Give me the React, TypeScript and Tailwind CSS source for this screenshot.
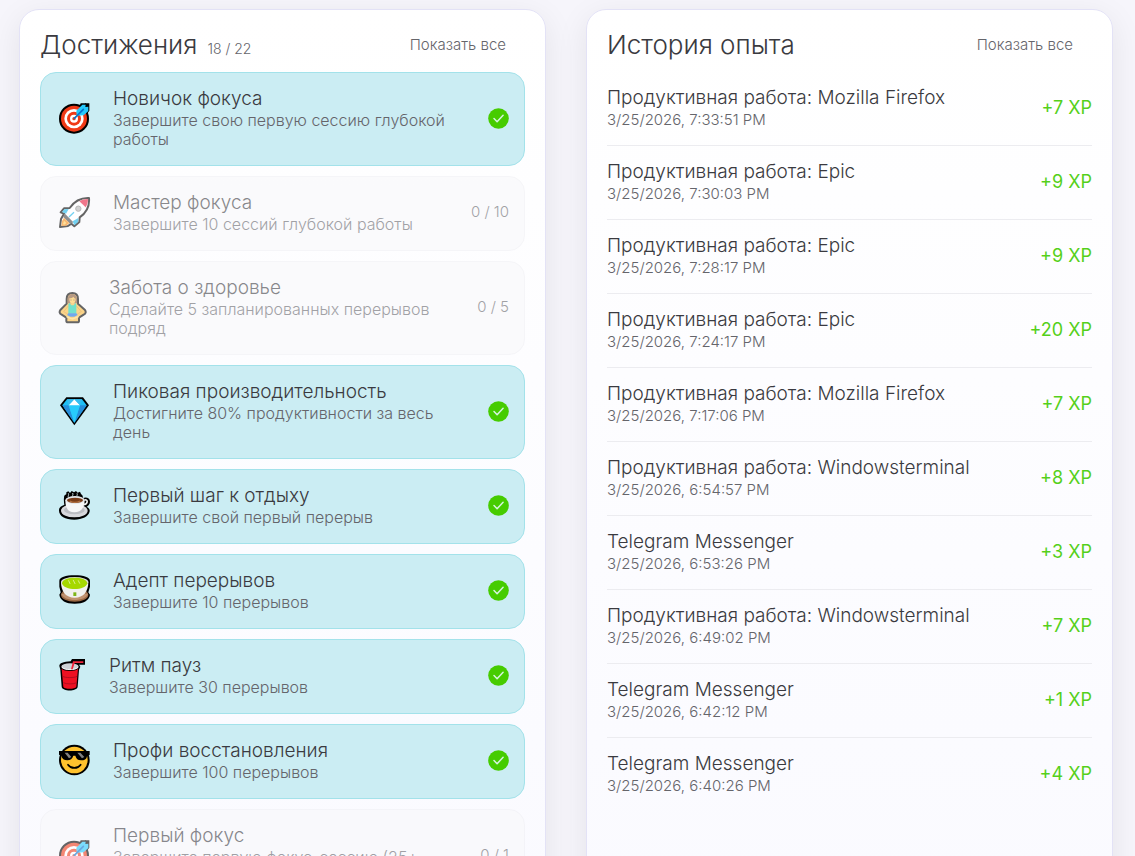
import React from 'react';

const TargetIcon = () => (
  <svg viewBox="54 36 99 99" className="w-[33px] h-[33px]" aria-hidden="true">
    <circle cx="102" cy="86" r="45" fill="#000" />
    <path d="M122 40h12l4-1v1h10v22l-10 14-28-6z" fill="#000" />
    <circle cx="102" cy="86" r="39" fill="#f03a17" />
    <circle cx="102" cy="86" r="29" fill="#fff" />
    <circle cx="102" cy="86" r="21" fill="#f03a17" />
    <circle cx="102" cy="86" r="12" fill="#fff" />
    <circle cx="102" cy="86" r="5" fill="#f03a17" />
    <path d="M110 77l-1-15 18-18h10l-1 7 9-1v13l-14 13z" fill="#26c9fc" />
    <path d="M103 85l27-27" stroke="#0a74cf" strokeWidth="5" strokeLinecap="round" />
  </svg>
);

const RocketIcon = () => (
  <svg viewBox="54 48 99 99" className="w-[33px] h-[33px]" aria-hidden="true">
    <path
      d="M147 54c-23-1-43 8-58 30l-17 1-10 12 10 4-9 16-3 24 24-3 10-7 9 8 15-13 1-14c22-15 30-34 28-58z"
      fill="#fff"
      stroke="#000"
      strokeWidth="6"
      strokeLinejoin="round"
    />
    <path d="M144 57c-10 0-18 2-26 7l19 18c5-8 7-16 7-25z" fill="#e81d3f" />
    <path d="M86 87l-13 1-7 8 12 5z" fill="#17b4e9" />
    <path d="M115 114l-1 12-11 10-5-12z" fill="#17b4e9" />
    <path d="M75 101l25 26-9 5-22-22z" fill="#454545" />
    <path d="M72 113l16 16-9 8-15 1 2-15z" fill="#f78b13" />
    <path d="M72 122l7 7-6 5-4-1z" fill="#ffd15c" />
    <path d="M87 111l15-14" stroke="#17b4e9" strokeWidth="4" />
    <circle cx="115" cy="86" r="8" fill="#b5b5b5" stroke="#8a8a8a" strokeWidth="3" />
  </svg>
);

const YogaIcon = () => (
  <svg viewBox="54 63 87 99" className="w-[29px] h-[33px]" aria-hidden="true">
    <path
      d="M97 69c-12 0-17 8-17 18v14l-19 19c-4 6-2 11 4 14l14 9v10c0 3 2 4 5 4h28c3 0 5-1 5-4v-10l14-9c6-3 8-8 4-14l-21-19V87c0-10-5-18-17-18z"
      fill="#f9b93c"
      stroke="#000"
      strokeWidth="6"
      strokeLinejoin="round"
    />
    <path d="M83 100V87c0-9 5-15 14-15s14 6 14 15v13z" fill="#8a5a35" />
    <path d="M88 85c6 0 9-2 12-5 2 4 5 5 7 6 0 9-4 15-10 15s-9-6-9-16z" fill="#ffc84f" />
    <path d="M91 90h4M100 90h4" stroke="#6b4521" strokeWidth="2" />
    <path d="M89 99l5 7h7l5-7 3 4v28H85v-28z" fill="#15cfa9" />
    <path d="M85 130h24l4 5-10 5H91l-10-5z" fill="#1470e0" />
    <path d="M85 108l-14 17 12 7M109 108l15 17-12 7" stroke="#d98c1c" strokeWidth="2" fill="none" />
    <path d="M79 140l18 7 19-7" stroke="#ffd773" strokeWidth="4" fill="none" />
  </svg>
);

const DiamondIcon = () => (
  <svg viewBox="54 59 99 99" className="w-[33px] h-[33px]" aria-hidden="true">
    <path d="M79 66h50l18 24-44 60-43-60z" fill="#000" />
    <path d="M81 72h45l14 18-37 52-36-52z" fill="#1fc0f5" />
    <path d="M67 90h19l17 52z" fill="#278eda" />
    <path d="M140 90h-20l-17 52z" fill="#278eda" />
    <path d="M86 90h34l-17 52z" fill="#28cbfc" />
    <path d="M103 72l17 18H86z" fill="#fff" />
    <path d="M81 72h22L86 90zM126 72h-23l17 18z" fill="#37bdf1" />
  </svg>
);

const CoffeeIcon = () => (
  <svg viewBox="54 57 99 99" className="w-[33px] h-[33px]" aria-hidden="true">
    <path
      d="M72 83c0-6 3-9 7-10v-6l6-3 5 5 5-6 7 4 6-4 5 5 7-3 3 7 4 4c1 3 2 5 2 8 10-4 21 0 21 11 0 7-5 12-10 15 6 3 10 8 9 14-3 16-22 25-46 25-28 0-47-11-46-29 0-8 8-13 16-15-1-7-2-15-1-22z"
      fill="#000"
    />
    <ellipse cx="103" cy="122" rx="40" ry="20" fill="#d8d8dc" />
    <ellipse cx="103" cy="120" rx="31" ry="13" fill="#bcbdc2" />
    <path d="M133 90c12-3 11 11-1 14" fill="none" stroke="#f1f1f1" strokeWidth="5" />
    <path d="M76 90c0 24 8 37 27 37s31-13 31-37z" fill="#f7f7f8" />
    <ellipse cx="105" cy="90" rx="29" ry="12" fill="#e5e5e7" />
    <ellipse cx="105" cy="91" rx="24" ry="8" fill="#793c18" />
    <path d="M89 93c9 5 21 5 32 0" stroke="#b87442" strokeWidth="4" fill="none" />
    <path d="M86 83c-4-5 2-7-1-13M99 82c-4-5 2-7-1-13M112 82c-4-5 2-7-1-12" stroke="#c4d6d8" strokeWidth="3" fill="none" />
  </svg>
);

const TeaIcon = () => (
  <svg viewBox="54 58 99 99" className="w-[33px] h-[33px]" aria-hidden="true">
    <path
      d="M104 62c-27 0-46 6-46 17v17l4 17-4 7c2 17 20 27 46 27s44-10 46-27l-5-7 5-17V79c0-11-19-17-46-17z"
      fill="#000"
    />
    <ellipse cx="104" cy="121" rx="41" ry="20" fill="#9c6a45" />
    <path d="M64 117c6 25 74 25 80 0z" fill="#c09270" />
    <path d="M63 81c0 29 14 48 41 48s41-19 41-48z" fill="#f1f1ee" />
    <ellipse cx="104" cy="82" rx="41" ry="15" fill="#dededa" />
    <path d="M66 86c2-22 74-22 76 0-4 23-72 23-76 0z" fill="#a6d800" />
    <path d="M86 78l4 9M100 77l5 10M115 78l4 8" stroke="#d9f18a" strokeWidth="3" strokeLinecap="round" />
    <path d="M100 113h9v11h-9z" fill="#7eb518" />
  </svg>
);

const CupIcon = () => (
  <svg viewBox="54 59 87 99" className="w-[29px] h-[33px]" aria-hidden="true">
    <path
      d="M58 80c0-8 12-13 34-14l4-7h39v17h-18l4 6-4 9-4 51c-2 15-46 15-48 0l-4-51z"
      fill="#000"
    />
    <path d="M65 88c8 9 42 9 49 0l-5 54c-3 8-37 8-39 0z" fill="#ed1022" />
    <ellipse cx="90" cy="82" rx="26" ry="10" fill="#cdd1d5" />
    <path d="M66 84c8 9 40 9 48 0" fill="none" stroke="#f6f6f6" strokeWidth="3" />
    <path d="M93 90l6-24h31v5h-26l-6 19z" fill="#ef253b" />
    <path d="M68 111c8 5 35 5 43 0M70 130c8 5 32 5 40 0" fill="none" stroke="#b40c1d" strokeWidth="3" />
  </svg>
);

const CoolIcon = () => (
  <svg viewBox="54 58 99 99" className="w-[33px] h-[33px]" aria-hidden="true">
    <circle cx="103" cy="106" r="46" fill="#000" />
    <circle cx="103" cy="106" r="40" fill="#ffc22d" />
    <path d="M57 79h92v12l-8 3c-1 11-9 13-18 13-10 0-14-5-17-14h-6c-3 9-9 14-18 14-10 0-16-5-18-14l-7-3z" fill="#000" />
    <path d="M74 84h9l11 13-7 4zM112 84h9l12 13-7 4z" fill="#818181" />
    <path d="M84 120c9 13 29 13 38 0" fill="none" stroke="#000" strokeWidth="5" strokeLinecap="round" />
  </svg>
);

const CheckBadge = () => (
  <svg viewBox="0 0 21 21" className="w-[21px] h-[21px] shrink-0" role="img" aria-label="Получено">
    <circle cx="10.5" cy="10.5" r="10.3" fill="#46cc00" />
    <path d="M6 10.6l3.1 3.2 6-6.6" fill="none" stroke="#d5f3dd" strokeWidth="1.5" strokeLinecap="round" strokeLinejoin="round" />
  </svg>
);

type Achievement = {
  title: string;
  text: string;
  icon: React.ComponentType;
  progress?: string;
};

const achievements: Achievement[] = [
  { title: 'Новичок фокуса', text: 'Завершите свою первую сессию глубокой работы', icon: TargetIcon },
  { title: 'Мастер фокуса', text: 'Завершите 10 сессий глубокой работы', icon: RocketIcon, progress: '0 / 10' },
  { title: 'Забота о здоровье', text: 'Сделайте 5 запланированных перерывов подряд', icon: YogaIcon, progress: '0 / 5' },
  { title: 'Пиковая производительность', text: 'Достигните 80% продуктивности за весь день', icon: DiamondIcon },
  { title: 'Первый шаг к отдыху', text: 'Завершите свой первый перерыв', icon: CoffeeIcon },
  { title: 'Адепт перерывов', text: 'Завершите 10 перерывов', icon: TeaIcon },
  { title: 'Ритм пауз', text: 'Завершите 30 перерывов', icon: CupIcon },
  { title: 'Профи восстановления', text: 'Завершите 100 перерывов', icon: CoolIcon },
  { title: 'Первый фокус', text: 'Завершите первую фокус-сессию (25+ минут)', icon: TargetIcon, progress: '0 / 1' },
];

const history = [
  { title: 'Продуктивная работа: Mozilla Firefox', time: '3/25/2026, 7:33:51 PM', xp: 7 },
  { title: 'Продуктивная работа: Epic', time: '3/25/2026, 7:30:03 PM', xp: 9 },
  { title: 'Продуктивная работа: Epic', time: '3/25/2026, 7:28:17 PM', xp: 9 },
  { title: 'Продуктивная работа: Epic', time: '3/25/2026, 7:24:17 PM', xp: 20 },
  { title: 'Продуктивная работа: Mozilla Firefox', time: '3/25/2026, 7:17:06 PM', xp: 7 },
  { title: 'Продуктивная работа: Windowsterminal', time: '3/25/2026, 6:54:57 PM', xp: 8 },
  { title: 'Telegram Messenger', time: '3/25/2026, 6:53:26 PM', xp: 3 },
  { title: 'Продуктивная работа: Windowsterminal', time: '3/25/2026, 6:49:02 PM', xp: 7 },
  { title: 'Telegram Messenger', time: '3/25/2026, 6:42:12 PM', xp: 1 },
  { title: 'Telegram Messenger', time: '3/25/2026, 6:40:26 PM', xp: 4 },
];

type PanelProps = { title: string; count?: string; children: React.ReactNode };

const Panel = ({ title, count, children }: PanelProps) => (
  <section className="min-w-0 rounded-[20px] border border-[#e3e2f6] bg-linear-to-b from-white to-[#fafaff] px-5 pt-[19px] pb-5 shadow-[0_8px_32px_rgba(0,0,0,0.08)]">
    <header className="flex h-8 items-center justify-between mb-[11px] pr-[19px]">
      <div className="flex items-baseline gap-[10px]">
        <h2 className="text-[26px] leading-8 font-light">{title}</h2>
        {count && <span className="text-sm text-[#65656b]">{count}</span>}
      </div>
      <button type="button" className="text-[15px] text-[#65656b] cursor-pointer">
        Показать все
      </button>
    </header>
    {children}
  </section>
);

const AchievementItem = ({ title, text, icon: Icon, progress }: Achievement) => (
  <li
    className={
      progress
        ? 'flex items-center gap-[22px] rounded-2xl border border-[#f0f0f4] bg-[#f9f9fb] pt-[14px] pb-4 pl-[17px] pr-[15px] opacity-60'
        : 'flex items-center gap-[22px] rounded-2xl border border-[#a3e2ea] bg-[#cbedf3] pt-[14px] pb-4 pl-[17px] pr-[15px]'
    }
  >
    <div className="shrink-0">
      <Icon />
    </div>
    <div className="min-w-0 flex-1">
      <h3 className="text-[19px] leading-6">{title}</h3>
      <p className="text-base leading-[19px] text-[#65656b]">{text}</p>
    </div>
    {progress ? <span className="shrink-0 text-[15px] text-[#65656b]">{progress}</span> : <CheckBadge />}
  </li>
);

export default function App() {
  return (
    <main className="grid h-screen grid-cols-2 gap-10 overflow-hidden bg-[#f6f5fb] pt-[9px] pl-[19px] pr-[22px] font-['Inter','Noto_Sans',sans-serif] font-light text-[#3a3a40]">
      <Panel title="Достижения" count="18 / 22">
        <ul className="flex flex-col gap-[10px]">
          {achievements.map((item) => (
            <AchievementItem key={item.title} {...item} />
          ))}
        </ul>
      </Panel>
      <Panel title="История опыта">
        <ul className="divide-y divide-[#ececf0]">
          {history.map((item) => (
            <li key={item.time} className="flex items-center justify-between pt-[14px] pb-4">
              <div>
                <h3 className="text-[19px] leading-6">{item.title}</h3>
                <p className="text-[15px] leading-[19px] text-[#65656b]">{item.time}</p>
              </div>
              <span className="text-lg font-normal text-[#55d01a]">+{item.xp} XP</span>
            </li>
          ))}
        </ul>
      </Panel>
    </main>
  );
}
